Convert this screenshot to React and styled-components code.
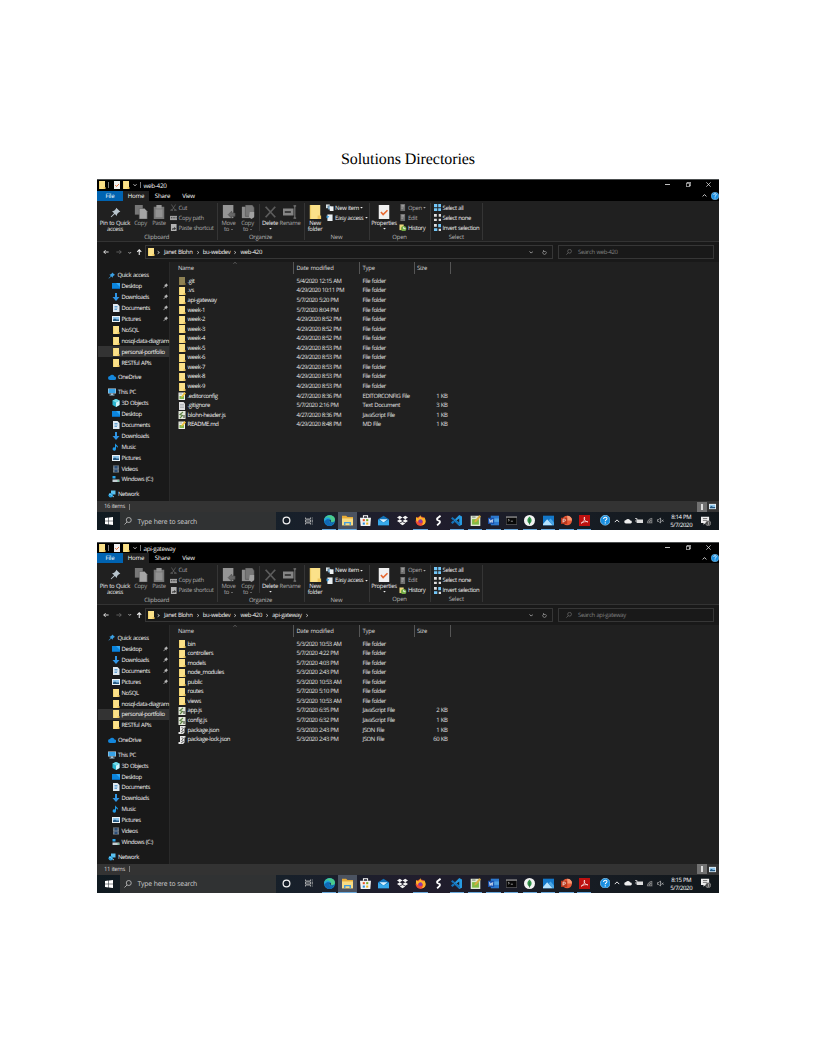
import React from "react";
import styled, { createGlobalStyle } from "styled-components";

const Global = createGlobalStyle`
  * { box-sizing: border-box; }
  body { margin: 0; background: #fff; }
`;

const Page = styled.main`
  width: 816px;
  height: 1056px;
  overflow: hidden;
  padding: 151px 97px 0;
  background: #fff;
`;
const Heading = styled.h1`
  margin: 0;
  height: 28px;
  font: 400 16px/18px "Liberation Serif", serif;
  letter-spacing: -0.07px;
  text-rendering: geometricPrecision;
  text-align: center;
  color: #000;
`;
const Screens = styled.div`
  display: flex;
  flex-direction: column;
  gap: 11.7px;
`;
const Screen = styled.section`
  width: 622px;
  height: 351px;
  display: flex;
  flex-direction: column;
  overflow: hidden;
  border-top: 1px solid #4c4f50;
  background: #202020;
  color: #f4f4f4;
  font-family: "Open Sans", "Noto Sans", sans-serif;
  font-size: 5.95px;
  line-height: 9px;
  letter-spacing: -0.4px;
  word-spacing: 0.4px;
  white-space: nowrap;
  text-rendering: geometricPrecision;
`;
const Svg = styled.svg`
  display: block;
  flex: none;
  width: ${(p) => p.$w || p.$s || 8}px;
  height: ${(p) => p.$s || 8}px;
  opacity: ${(p) => p.$o || 1};
`;

const art = {
  folder: (
    <>
      <path d="M2 0h11v16H2z" fill="#efcf68" />
      <path d="M3.500 0H14v16H3.500z" fill="#fbe189" />
      <path d="M11 12h4v4h-4z" fill="#efc75e" />
    </>
  ),
  pin: <path d="M9 1l6 6-2 .6-2.6 2.6L10 13 7 10 2 15l-1-1 5-5-3-3 3-.6L8.500 3z" fill="currentColor" />,
  desktop: (
    <>
      <path d="M0 2h16v12H0z" fill="#0b84dc" />
      <path d="M8 2h8v8z" fill="#35a8f4" />
      <path d="M0 12h16v2H0z" fill="#0767b5" />
    </>
  ),
  down: <path d="M6 0h4v8h5l-7 8-7-8h5z" fill="#2f94e4" />,
  doc: (
    <>
      <path d="M2 0h9l4 4v12H2z" fill="#dfe9f1" />
      <path d="M5 5h6M5 8h6M5 11h5" stroke="#3d8bc9" strokeWidth="1.500" />
    </>
  ),
  picture: (
    <>
      <path d="M0 2h16v12H0z" fill="#e9f0f4" />
      <path d="M2 4h12v8H2z" fill="#8cc4ea" />
      <path d="M2 12V9l4-2 3 2h5v3z" fill="#245780" />
    </>
  ),
  onedrive: <path d="M4 14a4 4 0 010-8 5 5 0 019 1 3.500 3.500 0 010 7z" fill="#1487dc" />,
  pc: (
    <>
      <path d="M0 1h16v10H0z" fill="#c6dbe8" />
      <path d="M1 2h14v8H1z" fill="#36a3e8" />
      <path d="M6 11h4v2h3v2H3v-2h3z" fill="#a3c7dd" />
    </>
  ),
  cube: (
    <>
      <path d="M8 0l7 3v9l-7 4-7-4V3z" fill="#29b5cf" />
      <path d="M8 7l7-4v9l-7 4z" fill="#d3f4f8" />
      <path d="M8 0l7 3-7 4-7-4z" fill="#74dce8" />
    </>
  ),
  music: <path d="M6 0c1 4 7 4 6 10-1-3-3-3-4-3v5a3.400 3.400 0 11-2-3z" fill="#219be9" />,
  video: (
    <>
      <path d="M2 1h12v14H2z" fill="#7f8b95" />
      <path d="M5 2h6v5H5zM5 9h6v5H5z" fill="#2a4d78" />
      <path d="M3.500 2v12M12.500 2v12" stroke="#20252b" strokeDasharray="1.500 1.500" />
    </>
  ),
  drive: (
    <>
      <path d="M1 9h14v5H1z" fill="#c6d0d6" />
      <path d="M1 2h6v5H1z" fill="#28a4ea" />
      <path d="M11 11h3v2h-3z" fill="#35a869" />
    </>
  ),
  network: (
    <>
      <path d="M6 1h9v8H6z" fill="#5cc1ef" />
      <path d="M8 10l4 3-2 2z" fill="#c4d4de" />
      <circle cx="5.500" cy="10.500" r="4.500" fill="#269ddb" />
      <path d="M2 9c3-3 4 3 6 1" stroke="#a9e5ff" strokeWidth="1.500" fill="none" />
    </>
  ),
  edit: (
    <>
      <path d="M1 1h13v15H1z" fill="#eef2e8" />
      <path d="M3 8h9v6H3z" fill="#86b854" />
      <path d="M13 0l3 3-7 7-3 1 1-3z" fill="#eec13c" />
      <path d="M3 4h5" stroke="#5d6d5c" />
    </>
  ),
  text: (
    <>
      <path d="M2 0h9l3 3v13H2z" fill="#dedede" />
      <path d="M4 5h8M4 8h8M4 11h8" stroke="#8f9498" strokeWidth="1" />
    </>
  ),
  script: (
    <>
      <path d="M1 0h14v16H1z" fill="#e4e9dc" />
      <path d="M10 2L4 7l5 2-5 5" stroke="#5f8546" strokeWidth="2.200" fill="none" />
      <path d="M12 8v6" stroke="#303b2b" strokeWidth="2" />
    </>
  ),
  json: (
    <>
      <path d="M4 0h11v3h-2v10l-3 3H1v-4h3z" fill="#e6e6e6" />
      <path d="M7 3l4 2-4 4 4 2-5 3" stroke="#555" strokeWidth="1.600" fill="none" />
    </>
  ),
  copy: (
    <>
      <path d="M1 0h9v11H1z" fill="#777" />
      <path d="M6 4h6l3 3v9H6z" fill="#a5a5a5" stroke="#555" strokeWidth=".6" />
    </>
  ),
  paste: (
    <>
      <path d="M2 2h12v14H2z" fill="#777" />
      <path d="M5 0h6v4H5z" fill="#969696" />
      <path d="M4 5h8v9H4z" fill="#929292" />
    </>
  ),
  moveTo: (
    <>
      <path d="M1 0h12v15H1z" fill="#959595" />
      <path d="M7 11l4-4v2h4v4h-4v2z" fill="#686868" stroke="#444" strokeWidth=".6" />
    </>
  ),
  copyTo: (
    <>
      <path d="M1 2h9v13H1z" fill="#8c8c8c" />
      <path d="M5 0h8l2 3v10H5z" fill="#777" stroke="#444" strokeWidth=".5" />
      <path d="M10 8h5v6l-3 2-3-2z" fill="#a1a1a1" />
    </>
  ),
  remove: <path d="M3 2l11 12M14 2L3 14" stroke="#5c5c5c" strokeWidth="2" />,
  rename: (
    <>
      <path d="M0 4h12v8H0z" fill="#858585" />
      <path d="M2 7h7v2H2z" fill="#333" />
      <path d="M12 1h3M13.500 1v14M12 15h3" stroke="#777" strokeWidth="1.300" />
    </>
  ),
  cut: <path d="M3 1l7 11M12 1L5 12M2 12h3v3H2zM10 12h3v3h-3z" fill="none" stroke="#777" strokeWidth="1.200" />,
  path: (
    <>
      <path d="M0 4h16v9H0z" fill="#a0a0a0" />
      <path d="M2 8h3M7 8h3M12 8h2" stroke="#333" strokeWidth="2" />
    </>
  ),
  shortcut: (
    <>
      <path d="M2 0h12v16H2z" fill="#b2b2b2" />
      <path d="M5 13V9h4V6l4 4-4 3v-2H7v2z" fill="#343434" />
    </>
  ),
  newItem: (
    <>
      <path d="M0 1h8v8H0z" fill="#d9e4e9" />
      <path d="M4 4h7v8H4z" fill="#7dafd0" stroke="#222" strokeWidth=".7" />
      <path d="M8 5h8v11H8z" fill="#f1f3f4" />
    </>
  ),
  easy: (
    <>
      <path d="M3 1h11v15H3z" fill="#e8edf0" />
      <path d="M1 3l6 2-4 5-2-2z" fill="#43a0dc" />
    </>
  ),
  properties: (
    <>
      <path d="M2 0h12v16H2z" fill="#f0f0f0" />
      <path d="M4.500 8l2.500 3 5-5" stroke="#e66830" strokeWidth="1.800" fill="none" />
    </>
  ),
  open: (
    <>
      <path d="M3 0h10v16H3z" fill="#6f6f6f" />
      <path d="M5 3h6M5 6h6M5 9h4" stroke="#b5b5b5" strokeWidth="1.500" />
    </>
  ),
  history: (
    <>
      <path d="M1 1h9v12H1z" fill="#ead779" />
      <circle cx="10" cy="10" r="5.700" fill="#72aa43" />
      <path d="M10 6v4h4" stroke="#fff" strokeWidth="1.800" fill="none" />
    </>
  ),
  all: <path d="M0 0h7v7H0zM9 0h7v7H9zM0 9h7v7H0zM9 9h7v7H9z" fill="#73c7f8" />,
  none: <path d="M0 0h6v6H0zM10 0h6v6h-6zM0 10h6v6H0zM10 10h6v6h-6z" fill="#dedede" />,
  invert: (
    <>
      <path d="M9 0h7v7H9zM0 9h7v7H0z" fill="#73c7f8" />
      <path d="M0 0h6v6H0zM10 10h6v6h-6z" fill="#dedede" />
    </>
  ),
  back: <path d="M15 8H2M7 3L2 8l5 5" stroke="currentColor" strokeWidth="2.400" fill="none" />,
  forward: <path d="M1 8h13M9 3l5 5-5 5" stroke="currentColor" strokeWidth="1.900" fill="none" />,
  up: <path d="M8 15V2M3 7l5-5 5 5" stroke="currentColor" strokeWidth="2.600" fill="none" />,
  chevDown: <path d="M2 5l6 6 6-6" stroke="currentColor" strokeWidth="3.200" fill="none" />,
  chevUp: <path d="M2 11l6-6 6 6" stroke="currentColor" strokeWidth="2.500" fill="none" />,
  chevRight: <path d="M6 4l4 4-4 4" stroke="currentColor" strokeWidth="2" fill="none" />,
  caret: <path d="M1 5h14l-7 8z" fill="currentColor" />,
  refresh: <path d="M11 4a5.500 5.500 0 11-6 0M5 0v5h5" stroke="currentColor" strokeWidth="2.200" fill="none" />,
  search: (
    <g fill="none" stroke="currentColor" strokeWidth="1.500">
      <circle cx="9.500" cy="6" r="5" />
      <path d="M6 10l-5 5" />
    </g>
  ),
  min: <path d="M0 8h16" stroke="currentColor" strokeWidth="2.500" />,
  restore: <path d="M1 4h10v11H1zM4 4V1h11v11h-4" stroke="currentColor" strokeWidth="2.200" fill="none" />,
  close: <path d="M1 1l14 14M15 1L1 15" stroke="currentColor" strokeWidth="2.200" />,
  windows: <path d="M0 2l7-1v6.500H0zM8 1l8-1v7.500H8zM0 8.500h7V15l-7-1zM8 8.500h8V16l-8-1z" fill="#fff" />,
  circle: <circle cx="8" cy="8" r="6" stroke="#f2f2f2" strokeWidth="2.200" fill="none" />,
  taskview: <path d="M1 1v3h10V1M1 15v-3h10v3M1 6h10v4H1zM14.500 1v2M14.500 5v6M14.500 13v2" stroke="#c8c8c8" strokeWidth="1.500" fill="none" />,
  edge: (
    <>
      <circle cx="8" cy="8" r="8" fill="#148fd5" />
      <path d="M0 8C1-2 16-2 16 7c0 4-7 4-6 1 0-5-8-4-10 0z" fill="#4acb8c" />
      <path d="M0 8c2-7 10-6 10 0-2-4-7-3-7 1z" fill="#20a6dc" />
      <path d="M1 9c4-5 8-2 7 0s2 5 6 3c-3 6-12 5-13-3z" fill="#1168b5" />
      <path d="M8 7c3 0 2 3 1 3 2 3 7 0 7 0-2 2-5 3-7 1z" fill="#20242c" />
    </>
  ),
  explorer: (
    <>
      <path d="M0 1h6l2 2h8v12H0z" fill="#e9ad38" />
      <path d="M0 5h16v10H0z" fill="#f8dc83" />
      <path d="M3 10h10v5h-2v-3H5v3H3z" fill="#3f9ce0" />
    </>
  ),
  store: (
    <>
      <path d="M5 4V1h6v3" stroke="#fff" strokeWidth="1.500" fill="none" />
      <path d="M0 4h16l-1 12H1z" fill="#f3f3f3" />
      <path d="M4 6h3v3H4z" fill="#e75525" />
      <path d="M9 6h3v3H9z" fill="#78ad27" />
      <path d="M4 11h3v3H4z" fill="#238cd8" />
      <path d="M9 11h3v3H9z" fill="#f3b51d" />
    </>
  ),
  mail: (
    <>
      <path d="M0 6l8-5 8 5v9H0z" fill="#1272b8" />
      <path d="M2 6h12l-6 5z" fill="#d7f2ff" />
      <path d="M0 7l8 4 8-4v8H0z" fill="#37a9ea" />
    </>
  ),
  dropbox: <path d="M4 1l4 2.600L4 6.200 0 3.600zM12 1l4 2.600-4 2.600-4-2.600zM4 6.200l4 2.600-4 2.600-4-2.600zM12 6.200l4 2.600-4 2.600-4-2.600zM8 10l4 2.500L8 15l-4-2.500z" fill="#f5f5f5" />,
  firefox: (
    <>
      <circle cx="8" cy="9" r="7" fill="#ed4b36" />
      <path d="M2 3l3 2 3-5c0 4 3 4 4 5l1-2c5 6 2 12-4 12 4-3 3-8-1-8-2 0-4 1-4 3C1 9 1 5 2 3z" fill="#ffb329" />
      <circle cx="8" cy="9" r="2.800" fill="#8c3ba8" />
    </>
  ),
  bolt: <path d="M11 1L6 5v2l4 2v2l-4 4" stroke="#fff" strokeWidth="2.600" strokeLinejoin="round" fill="none" />,
  code: (
    <>
      <path d="M12 0l4 2v12l-4 2L4 8z" fill="#279be2" />
      <path d="M12 5v6L8 8z" fill="#1c2129" />
      <path d="M0 5l2-2 11 9v4zM0 11l2 2 5-4-3-2z" fill="#1672b7" />
    </>
  ),
  note: (
    <>
      <path d="M1 1h12l2 2v13H1z" fill="#e0e8d5" />
      <path d="M3 6h10v8H3z" fill="#83ba43" />
      <path d="M14 0l2 2-7 8-3 1 1-3z" fill="#d7ac40" />
      <path d="M3 3h5" stroke="#455045" />
    </>
  ),
  word: (
    <>
      <path d="M4 1h12v14H4z" fill="#2d79ce" />
      <path d="M7 5h9v5H7z" fill="#51a3e5" />
      <path d="M0 4h9v9H0z" fill="#1751ad" />
      <path d="M2 6l1 5 1.500-4L6 11l1-5" stroke="#fff" fill="none" />
    </>
  ),
  cmd: (
    <>
      <path d="M0 2h16v12H0z" fill="#8d8d8d" />
      <path d="M.5 4h15v9.500H.5z" fill="#080808" />
      <path d="M3 6l2 1.500L3 9M7 9h3" stroke="#ccc" fill="none" />
    </>
  ),
  mongo: (
    <>
      <circle cx="8" cy="8" r="8" fill="#f3f3f3" />
      <path d="M8 2c5 5 3 8 0 11-3-3-5-6 0-11z" fill="#31944a" />
      <path d="M8 6v8" stroke="#27633a" />
    </>
  ),
  photos: (
    <>
      <path d="M0 1h16v14H0z" fill="#1478c9" />
      <path d="M0 13l6-7 8 9H0z" fill="#b5e3ff" />
      <path d="M8 8l3-3 5 6v4h-2z" fill="#4aa6e5" />
    </>
  ),
  ppt: (
    <>
      <circle cx="9" cy="8" r="7" fill="#e85a37" />
      <path d="M9 1a7 7 0 017 7H9z" fill="#f79a75" />
      <path d="M0 4h9v9H0z" fill="#b9381d" />
      <path d="M3 11V6h2a1.500 1.500 0 010 3H3" stroke="#fff" fill="none" />
    </>
  ),
  acrobat: (
    <>
      <path d="M0 0h16v16H0z" fill="#bd1110" />
      <path d="M3 12C7 10 9 6 8 3c-2 3 2 7 5 7-3-1-7 0-10 2z" stroke="#fff" fill="none" />
    </>
  ),
  help: (
    <>
      <circle cx="8" cy="8" r="7.500" fill="#198ee0" stroke="#9ad0ef" />
      <path d="M5.500 6c0-4 6-3 5 0-.5 1.500-2.500 1.500-2.500 3.500M8 11v2" stroke="#fff" strokeWidth="1.600" fill="none" />
    </>
  ),
  cloud: <path d="M4 13a3.500 3.500 0 010-7 5 5 0 018.500 1A3 3 0 0113 13z" fill="#eee" />,
  battery: (
    <>
      <path d="M4 5h12v7H4z" fill="#ddd" />
      <path d="M0 3h4v3H2v4h3" stroke="#ddd" strokeWidth="1.500" fill="none" />
    </>
  ),
  wifi: (
    <>
      <path d="M3 15C3 8 8 3 15 3v12z" fill="#4a4d50" />
      <path d="M3 14c0-6 5-11 11-11M7 14c0-4 3-7 7-7M11 14c0-2 1-3 3-3" stroke="#b5b5b5" strokeWidth="1.300" fill="none" />
    </>
  ),
  volume: <path d="M1 6h3l4-4v12l-4-4H1zM10 6l5 5M15 6l-5 5" stroke="#ddd" strokeWidth="1.300" fill="none" />,
  notice: (
    <>
      <path d="M0 1h13v10H7l-3 3v-3H0z" fill="#eee" />
      <path d="M3 4h7M3 7h7" stroke="#333" />
      <circle cx="11.500" cy="11.500" r="4" fill="#333" stroke="#aaa" />
      <path d="M10.500 9.500h2v4h-2M10.500 11.500h2" stroke="#fff" strokeWidth=".8" fill="none" />
    </>
  ),
};
const Icon = ({ n, s, w, o }) => (
  <Svg viewBox="0 0 16 16" $s={s} $w={w} $o={o} preserveAspectRatio={w ? "none" : undefined}>
    {art[n]}
  </Svg>
);

const TitleBar = styled.header`
  flex: none;
  height: 10.7px;
  padding-left: 0.500px;
  display: flex;
  align-items: center;
  background: #000;
  font-size: 6.300px;
  letter-spacing: -0.300px;
`;
const QuickTools = styled.div`
  display: flex;
  align-items: center;
  width: 46px;
`;
const QuickSlot = styled.span`
  width: ${(p) => p.$w}px;
`;
const Tick = styled.i`
  width: 1px;
  height: 6px;
  background: #7b7b7b;
  margin: 0 ${(p) => p.$r}px 0 ${(p) => p.$l}px;
`;
const Caption = styled.div`
  margin-left: auto;
  display: flex;
  align-items: center;
  gap: 15.500px;
  padding: 0 8px 2px 0;
`;
const Tabs = styled.nav`
  flex: none;
  height: 10px;
  display: flex;
  background: #000;
  color: #fff;
  font-size: 6.100px;
  letter-spacing: -0.200px;
`;
const Tab = styled.span`
  width: ${(p) => p.$w}px;
  line-height: 10px;
  text-align: center;
  background: ${(p) => p.$bg || "transparent"};
`;
const TabEnd = styled.div`
  margin-left: auto;
  display: flex;
  align-items: center;
  gap: 4px;
`;

const Ribbon = styled.div`
  flex: none;
  display: flex;
  height: 41.600px;
  padding-top: 2px;
  border-bottom: 1px solid #333;
  background: #202020;
`;
const Group = styled.div`
  width: ${(p) => p.$w}px;
  display: flex;
  flex-direction: column;
  height: 37px;
  border-right: 1px solid #353535;
`;
const GroupTools = styled.div`
  display: flex;
  height: 31px;
  padding-left: ${(p) => p.$l || 0}px;
`;
const GroupName = styled.div`
  text-align: center;
  line-height: 9.500px;
  color: #b8b8b8;
  letter-spacing: -0.200px;
`;
const BigTool = styled.div`
  width: ${(p) => p.$w}px;
  display: flex;
  flex-direction: column;
  align-items: center;
  padding-top: 2.500px;
  line-height: 5.800px;
  letter-spacing: -0.300px;
  color: ${(p) => (p.$off ? "#a6a6a6" : "#ececec")};
`;
const BigIcon = styled.div`
  height: 14px;
  margin-bottom: 2.300px;
  display: flex;
  align-items: center;
  color: #b8c4cc;
`;
const BigLabel = styled.span`
  text-align: center;
  white-space: pre;
`;
const Drop = styled.i`
  display: inline-block;
  margin: 0 0 1px 2px;
  border: 1px solid transparent;
  border-top-color: currentColor;
  border-bottom: 0;
`;
const Split = styled.i`
  width: 1px;
  height: 27px;
  margin: 1px 0 0 2px;
  background: #353535;
`;
const ToolList = styled.div`
  margin-left: 0.500px;
  display: flex;
  flex-direction: column;
`;
const SmallTool = styled.div`
  display: flex;
  align-items: center;
  gap: 1.600px;
  height: 10px;
  line-height: 10px;
  letter-spacing: -0.380px;
  color: ${(p) => (p.$off ? "#aaa" : "#f0f0f0")};
`;

const AddressRow = styled.div`
  flex: none;
  display: flex;
  align-items: center;
  height: 19.700px;
  padding-top: 0.500px;
  background: #191919;
`;
const NavButtons = styled.div`
  display: flex;
  align-items: center;
  width: 48px;
  padding-left: 6px;
`;
const NavSlot = styled.span`
  width: ${(p) => p.$w}px;
  color: ${(p) => p.$c || "#eee"};
`;
const Address = styled.div`
  width: 408px;
  height: 14px;
  display: flex;
  align-items: center;
  padding: 0 5px 0 1px;
  border: 1px solid #363636;
`;
const Crumb = styled.span`
  padding: 0 2px;
  letter-spacing: -0.330px;
`;
const AddressEnd = styled.div`
  margin-left: auto;
  display: flex;
  gap: 9px;
  color: #a8a8a8;
`;
const SearchBox = styled.div`
  display: flex;
  align-items: center;
  gap: 6px;
  width: 156px;
  height: 14px;
  margin-left: 5px;
  padding-left: 7px;
  border: 1px solid #363636;
  color: #808080;
  letter-spacing: -0.340px;
`;

const Main = styled.div`
  flex: 1;
  min-height: 0;
  display: flex;
`;
const Sidebar = styled.aside`
  width: 73px;
  padding-top: 7.800px;
  background: #191919;
  border-right: 1px solid #292929;
`;
const TreeRow = styled.div`
  display: flex;
  align-items: center;
  gap: 2px;
  height: 10.950px;
  line-height: 10px;
  width: 71px;
  margin: ${(p) => (p.$gap ? 3.700 : 0)}px 0 0 1px;
  padding-left: ${(p) => (p.$root ? 10 : 13.500)}px;
  letter-spacing: -0.380px;
  background: ${(p) => (p.$on ? "#333" : "transparent")};
`;
const BluePin = styled.span`
  color: #3aa0e4;
`;
const PinSlot = styled.span`
  margin-left: auto;
  padding-right: 1px;
  color: #b8b8b8;
`;
const Files = styled.div`
  flex: 1;
`;
const HeadRow = styled.div`
  display: flex;
  height: 12px;
  margin-bottom: 2.600px;
  line-height: 12px;
  color: #dcdcdc;
  letter-spacing: -0.200px;
`;
const HeadCell = styled.div`
  width: ${(p) => p.$w}px;
  padding-left: ${(p) => p.$l}px;
  border-right: 1px solid #555;
  position: relative;
`;
const SortMark = styled.span`
  position: absolute;
  top: -1px;
  right: 56px;
  color: #888;
`;
const FileRow = styled.div`
  display: flex;
  align-items: center;
  height: 9.570px;
  line-height: 9px;
  color: #e2e2e2;
`;
const FileName = styled.div`
  width: 126.500px;
  padding-left: 8px;
  display: flex;
  align-items: center;
  gap: 1.600px;
  color: #f4f4f4;
  letter-spacing: -0.370px;
`;
const Cell = styled.div`
  width: ${(p) => p.$w}px;
  text-align: ${(p) => (p.$r ? "right" : "left")};
  letter-spacing: ${(p) => p.$ls || -0.4}px;
`;

const Status = styled.footer`
  flex: none;
  height: 11px;
  display: flex;
  align-items: center;
  padding-left: 7px;
  background: #333;
  color: #d6d6d6;
`;
const ViewModes = styled.div`
  margin-left: auto;
  display: flex;
  align-items: center;
  height: 100%;
  gap: 2px;
  padding-right: 3px;
`;
const DetailMode = styled.span`
  width: 10px;
  height: 10px;
  display: flex;
  align-items: center;
  justify-content: center;
  background: #707070;
`;
const DetailBar = styled.i`
  width: 2.500px;
  height: 6px;
  background: #ddd;
`;
const Taskbar = styled.div`
  flex: none;
  height: 18px;
  display: flex;
  background: linear-gradient(90deg, #101a20, #17202a 30%, #211d2d 52%, #181d25 75%, #11171b);
`;
const Start = styled.div`
  width: 23px;
  display: flex;
  align-items: center;
  justify-content: center;
`;
const TaskSearch = styled.div`
  width: 155.500px;
  display: flex;
  align-items: center;
  gap: 5.500px;
  padding-left: 4px;
  background: #303233;
  color: #cfcfcf;
  font-size: 6.800px;
  letter-spacing: -0.220px;
`;
const Task = styled.div`
  width: ${(p) => p.$w || 18.250}px;
  display: flex;
  align-items: center;
  justify-content: center;
  border-bottom: 1px solid transparent;
`;
const RunTask = styled(Task)`
  background: ${(p) =>
    `linear-gradient(#6aa9dc, #6aa9dc) 50% 100% / ${p.$on ? 100 : 80}% 1px no-repeat, ${p.$on ? "#4b5361" : "transparent"}`};
  background-origin: border-box;
`;
const Clock = styled.div`
  width: 33px;
  padding: 1px 0 0 4px;
  text-align: center;
  line-height: 8px;
  letter-spacing: -0.350px;
  color: #fff;
`;

const tree = [
  ["Quick access", "pin", { root: 1, color: 1 }],
  ["Desktop", "desktop", { pin: 1 }],
  ["Downloads", "down", { pin: 1 }],
  ["Documents", "doc", { pin: 1 }],
  ["Pictures", "picture", { pin: 1 }],
  ["NoSQL", "folder", {}],
  ["nosql-data-diagram", "folder", {}],
  ["personal-portfolio", "folder", { on: 1 }],
  ["RESTful APIs", "folder", {}],
  ["OneDrive", "onedrive", { root: 1, gap: 1 }],
  ["This PC", "pc", { root: 1, gap: 1 }],
  ["3D Objects", "cube", {}],
  ["Desktop", "desktop", {}],
  ["Documents", "doc", {}],
  ["Downloads", "down", {}],
  ["Music", "music", {}],
  ["Pictures", "picture", {}],
  ["Videos", "video", {}],
  ["Windows (C:)", "drive", {}],
  ["Network", "network", { root: 1, gap: 1 }],
];
const dir = (name, date, icon = "folder") => [name, date, "File folder", "", icon];
const web420 = [
  dir(".git", "5/4/2020 12:15 AM", "hidden"),
  dir(".vs", "4/29/2020 10:11 PM"),
  dir("api-gateway", "5/7/2020 5:20 PM"),
  dir("week-1", "5/7/2020 8:04 PM"),
  dir("week-2", "4/29/2020 8:52 PM"),
  dir("week-3", "4/29/2020 8:52 PM"),
  dir("week-4", "4/29/2020 8:52 PM"),
  dir("week-5", "4/29/2020 8:53 PM"),
  dir("week-6", "4/29/2020 8:53 PM"),
  dir("week-7", "4/29/2020 8:53 PM"),
  dir("week-8", "4/29/2020 8:53 PM"),
  dir("week-9", "4/29/2020 8:53 PM"),
  [".editorconfig", "4/27/2020 8:36 PM", "EDITORCONFIG File", "1 KB", "edit"],
  [".gitignore", "5/7/2020 2:16 PM", "Text Document", "3 KB", "text"],
  ["blohn-header.js", "4/27/2020 8:36 PM", "JavaScript File", "1 KB", "script"],
  ["README.md", "4/29/2020 8:48 PM", "MD File", "1 KB", "edit"],
];
const gateway = [
  dir("bin", "5/3/2020 10:53 AM"),
  dir("controllers", "5/7/2020 4:22 PM"),
  dir("models", "5/7/2020 4:03 PM"),
  dir("node_modules", "5/3/2020 2:43 PM"),
  dir("public", "5/3/2020 10:53 AM"),
  dir("routes", "5/7/2020 5:10 PM"),
  dir("views", "5/3/2020 10:53 AM"),
  ["app.js", "5/7/2020 6:35 PM", "JavaScript File", "2 KB", "script"],
  ["config.js", "5/7/2020 6:32 PM", "JavaScript File", "1 KB", "script"],
  ["package.json", "5/3/2020 2:43 PM", "JSON File", "1 KB", "json"],
  ["package-lock.json", "5/3/2020 2:43 PM", "JSON File", "60 KB", "json"],
];
const tasks = [
  ["edge", 1], ["explorer", 1, 1], ["store"], ["mail"], ["dropbox"], ["firefox", 1], ["bolt"],
  ["code", 1], ["note", 1], ["word", 1], ["cmd", 1], ["mongo", 1], ["photos", 1], ["ppt", 1], ["acrobat", 1],
];

const Big = ({ w, off, icon, size = 14, label, caret, drop }) => (
  <BigTool $w={w} $off={off}>
    <BigIcon><Icon n={icon} s={size} /></BigIcon>
    <BigLabel>{label}{drop && <Drop />}</BigLabel>
    {caret && <Icon n="caret" s={3} />}
  </BigTool>
);
const Small = ({ icon, label, off, caret }) => (
  <SmallTool $off={off}>
    <Icon n={icon} s={7.5} />
    {label}
    {caret && <Icon n="caret" s={3} />}
  </SmallTool>
);

function RibbonBar() {
  return (
    <Ribbon>
      <Group $w={120.5}>
        <GroupTools $l={1}>
          <Big w={34} icon="pin" size={11} label={"Pin to Quick\naccess"} />
          <Big w={17} off icon="copy" label="Copy" />
          <Big w={20} off icon="paste" label="Paste" />
          <ToolList>
            <Small off icon="cut" label="Cut" />
            <Small off icon="path" label="Copy path" />
            <Small off icon="shortcut" label="Paste shortcut" />
          </ToolList>
        </GroupTools>
        <GroupName>Clipboard</GroupName>
      </Group>
      <Group $w={87}>
        <GroupTools $l={1.5}>
          <Big w={19} off icon="moveTo" label={"Move\nto"} drop />
          <Big w={19} off icon="copyTo" label={"Copy\nto"} drop />
          <Split />
          <Big w={20} icon="remove" label="Delete" caret />
          <Big w={20} off icon="rename" label="Rename" />
        </GroupTools>
        <GroupName>Organize</GroupName>
      </Group>
      <Group $w={65}>
        <GroupTools>
          <Big w={21} icon="folder" label={"New\nfolder"} />
          <ToolList>
            <Small icon="newItem" label="New item" caret />
            <Small icon="easy" label="Easy access" caret />
          </ToolList>
        </GroupTools>
        <GroupName>New</GroupName>
      </Group>
      <Group $w={61}>
        <GroupTools>
          <Big w={29} icon="properties" label="Properties" caret />
          <ToolList>
            <Small off icon="open" label="Open" caret />
            <Small off icon="open" label="Edit" />
            <Small icon="history" label="History" />
          </ToolList>
        </GroupTools>
        <GroupName>Open</GroupName>
      </Group>
      <Group $w={52.5}>
        <GroupTools $l={2.5}>
          <ToolList>
            <Small icon="all" label="Select all" />
            <Small icon="none" label="Select none" />
            <Small icon="invert" label="Invert selection" />
          </ToolList>
        </GroupTools>
        <GroupName>Select</GroupName>
      </Group>
    </Ribbon>
  );
}

function Explorer({ title, crumbs, trailing, files, time }) {
  return (
    <Screen>
      <TitleBar>
        <QuickTools>
          <QuickSlot $w={8}><Icon n="folder" s={8} /></QuickSlot>
          <Tick $l={2} $r={4} />
          <QuickSlot $w={9.5}><Icon n="properties" s={8} /></QuickSlot>
          <QuickSlot $w={11}><Icon n="folder" s={8} /></QuickSlot>
          <QuickSlot $w={4}><Icon n="chevDown" s={4} /></QuickSlot>
          <Tick $l={3} $r={0} />
        </QuickTools>
        {title}
        <Caption>
          <Icon n="min" s={5} />
          <Icon n="restore" s={5} />
          <Icon n="close" s={5} />
        </Caption>
      </TitleBar>
      <Tabs>
        <Tab $w={26} $bg="#0063b1">File</Tab>
        <Tab $w={26} $bg="#202020">Home</Tab>
        <Tab $w={27}>Share</Tab>
        <Tab $w={25}>View</Tab>
        <TabEnd>
          <Icon n="chevUp" s={5} />
          <Icon n="help" s={8} />
        </TabEnd>
      </Tabs>
      <RibbonBar />
      <AddressRow>
        <NavButtons>
          <NavSlot $w={13}><Icon n="back" s={6} /></NavSlot>
          <NavSlot $w={12} $c="#777"><Icon n="forward" s={6} /></NavSlot>
          <NavSlot $w={8}><Icon n="chevDown" s={3.5} /></NavSlot>
          <NavSlot $w={9}><Icon n="up" s={6.5} /></NavSlot>
        </NavButtons>
        <Address>
          <Icon n="folder" s={8} />
          <Icon n="chevRight" s={5} w={7} />
          {crumbs.map((c, i) => (
            <React.Fragment key={c}>
              <Crumb>{c}</Crumb>
              {(i < crumbs.length - 1 || trailing) && <Icon n="chevRight" s={5} w={6.2} />}
            </React.Fragment>
          ))}
          <AddressEnd>
            <Icon n="chevDown" s={4.5} />
            <Icon n="refresh" s={5} />
          </AddressEnd>
        </Address>
        <SearchBox>
          <Icon n="search" s={6} />
          Search {title}
        </SearchBox>
      </AddressRow>
      <Main>
        <Sidebar>
          {tree.map(([label, icon, o], i) => (
            <TreeRow key={i} $root={o.root} $gap={o.gap} $on={o.on}>
              {o.color ? <BluePin><Icon n={icon} s={7} w={7.5} /></BluePin> : <Icon n={icon} s={8} />}
              {label}
              {o.pin && <PinSlot><Icon n="pin" s={5.5} /></PinSlot>}
            </TreeRow>
          ))}
        </Sidebar>
        <Files>
          <HeadRow>
            <HeadCell $w={124} $l={8}>
              Name
              <SortMark><Icon n="chevUp" s={4} /></SortMark>
            </HeadCell>
            <HeadCell $w={66} $l={2.5}>Date modified</HeadCell>
            <HeadCell $w={54.5} $l={2.5}>Type</HeadCell>
            <HeadCell $w={36.5} $l={2.5}>Size</HeadCell>
          </HeadRow>
          {files.map(([name, date, type, size, icon]) => (
            <FileRow key={name}>
              <FileName>
                <Icon n={icon === "hidden" ? "folder" : icon} s={8} o={icon === "hidden" ? 0.5 : 1} />
                {name}
              </FileName>
              <Cell $w={66} $ls={-0.47}>{date}</Cell>
              <Cell $w={60}>{type}</Cell>
              <Cell $w={25} $r>{size}</Cell>
            </FileRow>
          ))}
        </Files>
      </Main>
      <Status>
        {files.length} items
        <Tick $l={4.5} $r={0} />
        <ViewModes>
          <DetailMode><DetailBar /></DetailMode>
          <Icon n="picture" s={7} />
        </ViewModes>
      </Status>
      <Taskbar>
        <Start><Icon n="windows" s={8} /></Start>
        <TaskSearch><Icon n="search" s={8} />Type here to search</TaskSearch>
        <Task $w={22}><Icon n="circle" s={9} /></Task>
        <Task $w={22.5}><Icon n="taskview" s={8} /></Task>
        {tasks.map(([n, run, on]) =>
          run ? (
            <RunTask key={n} $on={on}><Icon n={n} s={11} /></RunTask>
          ) : (
            <Task key={n}><Icon n={n} s={11} /></Task>
          )
        )}
        <Task $w={22}><Icon n="help" s={10.5} /></Task>
        <Task $w={3}><Icon n="chevUp" s={6} /></Task>
        <Task $w={18}><Icon n="cloud" s={8} /></Task>
        <Task $w={5}><Icon n="battery" s={8} /></Task>
        <Task $w={16}><Icon n="wifi" s={7} /></Task>
        <Task $w={5}><Icon n="volume" s={7} /></Task>
        <Clock>{time}<br />5/7/2020</Clock>
        <Task $w={20}><Icon n="notice" s={10} /></Task>
      </Taskbar>
    </Screen>
  );
}

export default function App() {
  return (
    <Page>
      <Global />
      <Heading>Solutions Directories</Heading>
      <Screens>
        <Explorer title="web-420" crumbs={["Janet Blohn", "bu-webdev", "web-420"]} files={web420} time="8:14 PM" />
        <Explorer title="api-gateway" crumbs={["Janet Blohn", "bu-webdev", "web-420", "api-gateway"]} trailing files={gateway} time="8:15 PM" />
      </Screens>
    </Page>
  );
}
